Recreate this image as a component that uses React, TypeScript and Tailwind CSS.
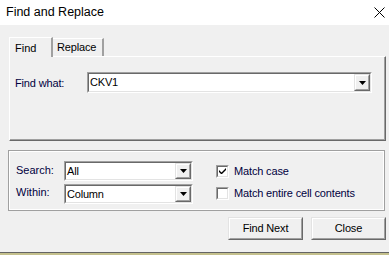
import React from 'react';

const font = { fontFamily: '"Liberation Sans", Arial, sans-serif' };

function DropButton() {
  return (
    <div className="h-full w-[16px] border border-t-[#e3e3e3] border-l-[#e3e3e3] border-b-[#696969] border-r-[#696969] bg-[#f0f0f0]">
      <div className="h-full w-full border border-t-white border-l-white border-b-[#a0a0a0] border-r-[#a0a0a0] flex items-center justify-center">
        <svg width="7" height="4" viewBox="0 0 7 4">
          <path d="M0 0H7L3.5 4Z" fill="#000" />
        </svg>
      </div>
    </div>
  );
}

function Combo({ value, className }: { value: string; className: string }) {
  return (
    <div className={`${className} border border-t-[#a0a0a0] border-l-[#a0a0a0] border-b-white border-r-white`}>
      <div className="h-full border border-t-[#696969] border-l-[#696969] border-b-[#e3e3e3] border-r-[#e3e3e3] bg-white flex items-stretch">
        <div className="flex-1 flex items-center pl-[1px] text-[11px] text-black leading-none tracking-[-0.2px]">{value}</div>
        <DropButton />
      </div>
    </div>
  );
}

function Check({ checked, label }: { checked: boolean; label: string }) {
  return (
    <div className="flex items-center h-[13px]">
      <div className="w-[13px] h-[13px] border border-t-[#a0a0a0] border-l-[#a0a0a0] border-b-white border-r-white">
        <div className="w-full h-full border border-t-[#696969] border-l-[#696969] border-b-[#e3e3e3] border-r-[#e3e3e3] bg-white flex items-center justify-center">
          {checked && (
            <svg width="7" height="7" viewBox="0 0 7 7">
              <path d="M0 2L0 4L2 6L3 6L7 2L7 0L2.5 4.5Z" fill="#000" />
            </svg>
          )}
        </div>
      </div>
      <span className="ml-[5px] text-[11px] text-[#000040] leading-none tracking-[-0.15px]">{label}</span>
    </div>
  );
}

function Button({ label }: { label: string }) {
  return (
    <div className="w-[75px] h-[23px] border border-t-[#e3e3e3] border-l-[#e3e3e3] border-b-[#696969] border-r-[#696969] bg-[#f0f0f0]">
      <div className="w-full h-full border border-t-white border-l-white border-b-[#a0a0a0] border-r-[#a0a0a0] flex items-center justify-center text-[11px] text-black tracking-[-0.15px]">
        {label}
      </div>
    </div>
  );
}

export default function App() {
  return (
    <div className="w-[389px] h-[255px] bg-[#f0f0f0] flex flex-col overflow-hidden" style={font}>
      <div className="h-[25px] bg-white flex items-center justify-between pl-[6px] pr-[3px] shrink-0">
        <span className="text-[12.5px] text-black">Find and Replace</span>
        <svg width="11" height="11" viewBox="0 0 11 11" className="mr-[1px]">
          <path d="M0.5 0.5L10.5 10.5M10.5 0.5L0.5 10.5" stroke="#000" strokeWidth="1" />
        </svg>
      </div>

      <div className="flex flex-col pl-[8px] pr-[3px] pt-[12px]">
        <div className="flex items-end h-[20px] pl-[1px] relative z-10">
          <div className="w-[44px] h-[20px] bg-[#f0f0f0] border-l border-t border-l-white border-t-white border-r-2 border-r-[#a0a0a0] flex items-start pt-[2px] pl-[5px] text-[11px] text-black">
            Find
          </div>
          <div className="w-[51px] h-[18px] mb-[1px] bg-[#f0f0f0] border-t border-t-white border-r-2 border-r-[#a0a0a0] flex items-center pl-[4px] text-[11px] text-black tracking-[-0.15px]">
            Replace
          </div>
        </div>
        <div className="h-[85px] -mt-[1px] ml-[1px] border border-t-white border-l-white border-b-[#696969] border-r-[#696969]">
          <div className="h-full border-b border-r border-b-[#a0a0a0] border-r-[#a0a0a0] flex items-start pt-[15px] pl-[5px]">
            <span className="w-[72px] mt-[6px] text-[11px] text-[#000040] leading-none tracking-[-0.15px]">Find what:</span>
            <Combo value="CKV1" className="w-[285px] h-[21px]" />
          </div>
        </div>

        <div className="mt-[9px] h-[61px] border border-[#a0a0a0] mr-[1px]">
          <div className="h-full border border-white flex items-start pt-[9px] pl-[6px]">
            <div className="flex flex-col gap-[3px] w-[48px] pt-[4px]">
              <span className="h-[19px] text-[11px] text-[#000040] leading-none">Search:</span>
              <span className="h-[19px] text-[11px] text-[#000040] leading-none">Within:</span>
            </div>
            <div className="flex flex-col gap-[3px]">
              <Combo value="All" className="w-[129px] h-[20px]" />
              <Combo value="Column" className="w-[129px] h-[20px]" />
            </div>
            <div className="flex flex-col gap-[9px] ml-[23px] pt-[4px]">
              <Check checked label="Match case" />
              <Check checked={false} label="Match entire cell contents" />
            </div>
          </div>
        </div>

        <div className="flex justify-end gap-[8px] mt-[6px]">
          <Button label="Find Next" />
          <Button label="Close" />
        </div>
      </div>

      <div className="mt-auto h-[1px] bg-[#646464]" />
      <div className="h-[2px] bg-[#c4c08c]" />
    </div>
  );
}
